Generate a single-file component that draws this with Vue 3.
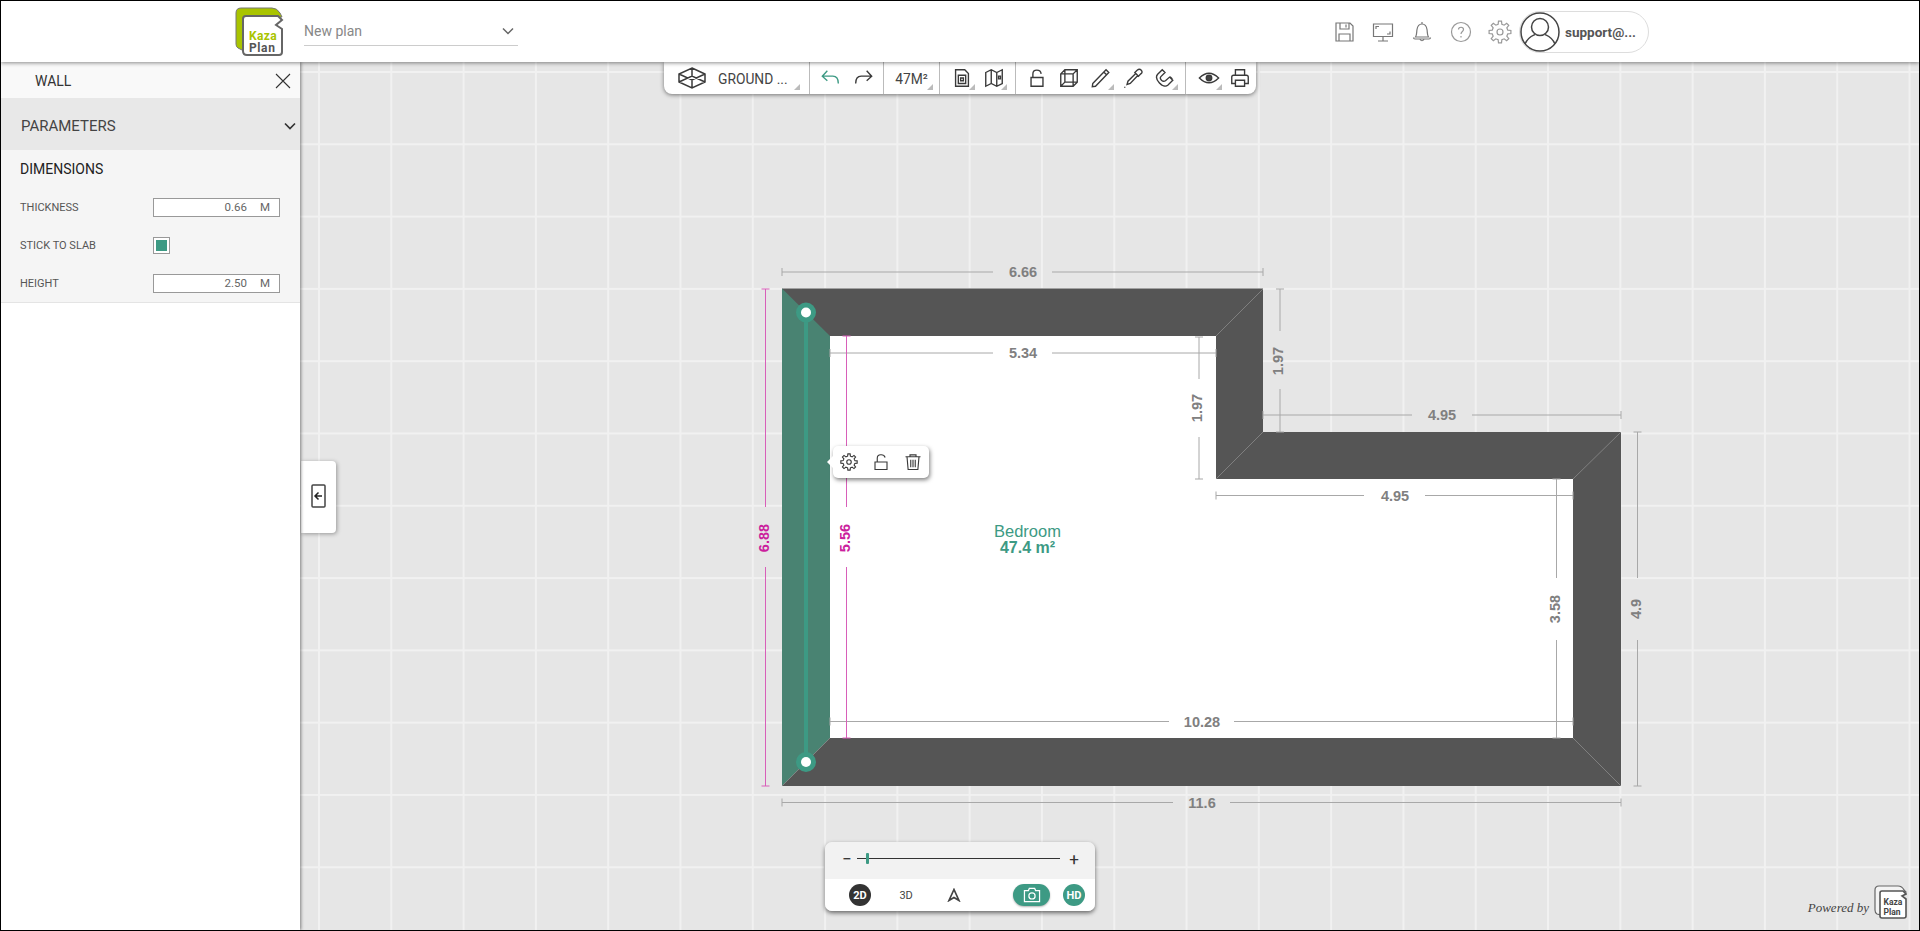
<script setup>
// cotas del plano, en coordenadas de pagina
const hDims = [
  { y: 272, x1: 782, x2: 1263, g1: 993, g2: 1052, tx: 1023, label: '6.66' },
  { y: 353, x1: 830, x2: 1216, g1: 993, g2: 1052, tx: 1023, label: '5.34' },
  { y: 415, x1: 1263, x2: 1621, g1: 1412, g2: 1472, tx: 1442, label: '4.95' },
  { y: 495.5, x1: 1216, x2: 1573, g1: 1364, g2: 1425, tx: 1395, label: '4.95' },
  { y: 721.5, x1: 830, x2: 1573, g1: 1169, g2: 1234, tx: 1202, label: '10.28' },
  { y: 802.5, x1: 782, x2: 1621, g1: 1173, g2: 1230, tx: 1202, label: '11.6' },
]
const vDims = [
  { x: 1199, y1: 337, y2: 479, g1: 379, g2: 437, ty: 408, label: '1.97' },
  { x: 1280, y1: 289, y2: 432, g1: 331, g2: 389, ty: 361, label: '1.97' },
  { x: 1556.5, y1: 479, y2: 738, g1: 578, g2: 640, ty: 609, label: '3.58' },
  { x: 1637.5, y1: 432, y2: 786, g1: 578, g2: 640, ty: 609, label: '4.9' },
]
const pinkDims = [
  { x: 765.5, y1: 289, y2: 786, g1: 507, g2: 567, ty: 538, label: '6.88' },
  { x: 846.5, y1: 336, y2: 738, g1: 507, g2: 567, ty: 538, label: '5.56' },
]
const miters = [
  [1263, 289, 1216, 336],
  [1263, 432, 1216, 479],
  [1621, 432, 1573, 479],
  [1621, 786, 1573, 738],
  [782, 786, 830, 738],
]

// rueda dentada para los iconos de ajustes
const gearPath = (c, rOut, rIn, teeth) => {
  const pts = []
  for (let i = 0; i < teeth; i++) {
    const a = (i / teeth) * Math.PI * 2
    const w = Math.PI / teeth / 2
    const list = [
      [rIn, a - w * 1.2],
      [rOut, a - w * 0.7],
      [rOut, a + w * 0.7],
      [rIn, a + w * 1.2],
    ]
    list.forEach(([r, t]) => pts.push((c + r * Math.cos(t)).toFixed(2) + ' ' + (c + r * Math.sin(t)).toFixed(2)))
  }
  return 'M' + pts.join('L') + 'Z'
}
const gear = gearPath(12, 11, 8, 8)
</script>

<template>
  <div class="app">
    <header class="topbar">
      <div class="brand">
        <svg class="logo" viewBox="0 0 49 49" width="49" height="49">
          <path d="M1 6Q1 1 6 1H37Q42 1 45 6L47 10H9V44L3 41Q1 40 1 37Z" fill="#a9c400" stroke="#777" stroke-width="1" />
          <path d="M8 12Q8 9 11 9H43L47 13L41 18L47 22V45Q47 48 44 48H12Q8 48 8 44Z" fill="#fff" stroke="#666" stroke-width="2" />
          <text x="14" y="33" class="logo-kaza">Kaza</text>
          <text x="14" y="45" class="logo-plan">Plan</text>
        </svg>
        <div class="plan-select">
          <span>New plan</span>
          <svg viewBox="0 0 12 8" width="12" height="8"><path d="M1 1.5L6 6.5L11 1.5" fill="none" stroke="#666" stroke-width="1.5" /></svg>
        </div>
      </div>
      <div class="top-actions">
        <svg viewBox="0 0 24 24" width="24" height="24" class="ti">
          <path d="M4 3H18L21 6V21H4ZM8 3V9H17V3M14 4.5V7.5M7 21V14H18V21" />
        </svg>
        <svg viewBox="0 0 24 24" width="24" height="24" class="ti">
          <path d="M2.5 4H21.5V16.5H2.5ZM12 16.5V21M7 21H17M5 9V6.5H8M19 11.5V14H16" />
        </svg>
        <svg viewBox="0 0 24 24" width="24" height="24" class="ti">
          <path d="M12 2V4M5.5 17C7 15 6.5 12 7 9.5C7.5 6 9.5 4 12 4S16.5 6 17 9.5C17.5 12 17 15 18.5 17ZM3.5 17.5Q3.5 19 5 19H19Q20.5 19 20.5 17.5M10 19.5Q12 22 14 19.5" />
        </svg>
        <svg viewBox="0 0 24 24" width="24" height="24" class="ti ti-light">
          <circle cx="12" cy="12" r="9.5" />
          <path d="M9.5 9.5C9.5 6.5 14.5 6.5 14.5 9.5C14.5 11.5 12 11.5 12 14M12 16V17.5" />
        </svg>
        <svg viewBox="0 0 24 24" width="24" height="24" class="ti ti-light">
          <path :d="gear" />
          <circle cx="12" cy="12" r="3" />
        </svg>
        <div class="user-pill">
          <svg viewBox="0 0 40 40" width="40" height="40" class="avatar">
            <circle cx="20" cy="20" r="19" fill="#fff" stroke="#444" stroke-width="1.5" />
            <circle cx="20" cy="15" r="8.5" fill="none" stroke="#444" stroke-width="1.5" />
            <path d="M5 32C8 25 13 23.5 15 22.5M35 32C32 25 27 23.5 25 22.5" fill="none" stroke="#444" stroke-width="1.5" />
          </svg>
          <span>support@...</span>
        </div>
      </div>
    </header>

    <main class="workspace">
      <aside class="panel">
        <div class="panel-head">
          <span>WALL</span>
          <svg viewBox="0 0 16 16" width="16" height="16"><path d="M1 1L15 15M15 1L1 15" fill="none" stroke="#333" stroke-width="1.1" /></svg>
        </div>
        <div class="panel-acc">
          <span>PARAMETERS</span>
          <svg viewBox="0 0 12 8" width="12" height="8"><path d="M1 1.5L6 6.5L11 1.5" fill="none" stroke="#333" stroke-width="1.7" /></svg>
        </div>
        <section class="panel-body">
          <h3>DIMENSIONS</h3>
          <div class="row">
            <label>THICKNESS</label>
            <div class="field"><span>0.66</span><span class="unit">M</span></div>
          </div>
          <div class="row">
            <label>STICK TO SLAB</label>
            <div class="check"><i></i></div>
          </div>
          <div class="row">
            <label>HEIGHT</label>
            <div class="field"><span>2.50</span><span class="unit">M</span></div>
          </div>
        </section>
      </aside>

      <div class="canvas">
        <svg class="plan" viewBox="300 62 1619 868" width="1619" height="868">
          <path d="M782 288.5H1263V432H1621V786H782Z" fill="#555" />
          <path d="M830 336H1216V479H1573V738H830Z" fill="#fff" />
          <path d="M782 288.5L830 336V738L782 786Z" fill="#498372" />
          <line v-for="(m, i) in miters" :key="i" :x1="m[0]" :y1="m[1]" :x2="m[2]" :y2="m[3]" stroke="#8a8a8a" stroke-width="0.8" />

          <g v-for="d in hDims" :key="d.label + d.y" class="dim">
            <path :d="`M${d.x1} ${d.y}H${d.g1}M${d.g2} ${d.y}H${d.x2}M${d.x1} ${d.y - 4}V${d.y + 4}M${d.x2} ${d.y - 4}V${d.y + 4}`" />
            <text :x="d.tx" :y="d.y" text-anchor="middle" dominant-baseline="central">{{ d.label }}</text>
          </g>
          <g v-for="d in vDims" :key="d.label + d.x" class="dim">
            <path :d="`M${d.x} ${d.y1}V${d.g1}M${d.x} ${d.g2}V${d.y2}M${d.x - 4} ${d.y1}H${d.x + 4}M${d.x - 4} ${d.y2}H${d.x + 4}`" />
            <text :x="d.x - 2" :y="d.ty" text-anchor="middle" dominant-baseline="central" :transform="`rotate(-90 ${d.x - 2} ${d.ty})`">{{ d.label }}</text>
          </g>
          <g v-for="d in pinkDims" :key="d.label" class="dim dim-pink">
            <path :d="`M${d.x} ${d.y1}V${d.g1}M${d.x} ${d.g2}V${d.y2}M${d.x - 4} ${d.y1}H${d.x + 4}M${d.x - 4} ${d.y2}H${d.x + 4}`" />
            <text :x="d.x - 2" :y="d.ty" text-anchor="middle" dominant-baseline="central" :transform="`rotate(-90 ${d.x - 2} ${d.ty})`">{{ d.label }}</text>
          </g>

          <line x1="806" y1="312" x2="806" y2="762" stroke="#3d9a84" stroke-width="4" />
          <circle cx="806" cy="312.5" r="10" fill="#3d9a84" />
          <circle cx="806" cy="312.5" r="5" fill="#fff" />
          <circle cx="806" cy="762" r="10" fill="#3d9a84" />
          <circle cx="806" cy="762" r="5" fill="#fff" />

          <text x="1027.5" y="536.5" class="room-name" text-anchor="middle">Bedroom</text>
          <text x="1027.5" y="552.5" class="room-area" text-anchor="middle">47.4 m²</text>
        </svg>

        <nav class="toolbar">
          <div class="tgroup tg-level corner">
            <svg viewBox="0 0 30 24" width="30" height="24" class="ti ti-dark">
              <path d="M15 2L28 8V16L15 22L2 16V8ZM2 8L15 14L28 8M15 14V22M2 16L15 10L28 16M15 2V10" />
            </svg>
            <span>GROUND ...</span>
          </div>
          <div class="tgroup tg-undo">
            <button>
              <svg viewBox="0 0 24 24" width="22" height="22" class="ti ti-green"><path d="M8 4L2.5 10L8 15M3 10H14Q20 10 20 18" /></svg>
            </button>
            <button>
              <svg viewBox="0 0 24 24" width="22" height="22" class="ti ti-dark"><path d="M16 4L21.5 10L16 15M21 10H10Q4 10 4 18" /></svg>
            </button>
          </div>
          <div class="tgroup tg-area corner"><span>47M²</span></div>
          <div class="tgroup tg-four">
            <button class="corner">
              <svg viewBox="0 0 24 24" width="22" height="22" class="ti ti-dark"><path d="M5 3H15L19 7V21H5ZM8 9H16V18H8ZM10.5 12H13.5V15H10.5Z" /></svg>
            </button>
            <button class="corner">
              <svg viewBox="0 0 24 24" width="22" height="22" class="ti ti-dark"><path d="M3 6L9 3L15 6L21 3V18L15 21L9 18L3 21ZM9 3V18M15 6V21M17 10H19V13H17Z" /></svg>
            </button>
          </div>
          <div class="tgroup tg-five">
            <button>
              <svg viewBox="0 0 24 24" width="22" height="22" class="ti ti-dark"><path d="M5.5 11.5H18.5V21H5.5ZM7.5 11.5V7.5C7.5 2 16 2 16.5 7.5" /></svg>
            </button>
            <button>
              <svg viewBox="0 0 24 24" width="22" height="22" class="ti ti-dark"><path d="M3 7.5L7.5 3H21V16.5L16.5 21H3ZM3 7.5H16.5V21M16.5 7.5L21 3M7.5 3V16.5H21M7.5 16.5L3 21" /></svg>
            </button>
            <button class="corner">
              <svg viewBox="0 0 24 24" width="22" height="22" class="ti ti-dark"><path d="M3 18L17.5 3L20.5 6L6 21L2.5 21.5ZM15 5.5L18 8.5" /></svg>
            </button>
            <button>
              <svg viewBox="0 0 24 24" width="22" height="22" class="ti ti-dark"><path d="M16.5 3.5Q19 1.5 21 3.5T20.5 7.5L18 10L14 6ZM15 7L6.5 15.5L5.5 19L9 18L17 9.5M3 22.5V21.5" /></svg>
            </button>
            <button class="corner">
              <svg viewBox="0 0 24 24" width="22" height="22" class="ti ti-dark"><path d="M12 6L7.5 10.5C5.5 13 9.5 17 12.5 15L17 11L20.5 14.5L15 20C10 24 -0.5 13 4 8L9 3ZM9 3L11.5 5.5M17.5 10.5L20 13" /></svg>
            </button>
          </div>
          <div class="tgroup tg-six">
            <button class="corner">
              <svg viewBox="0 0 24 24" width="22" height="22" class="ti ti-dark"><path d="M1.5 12Q12 1.5 22.5 12Q12 22.5 1.5 12Z" /><circle cx="12" cy="12" r="3" fill="#444" /></svg>
            </button>
            <button>
              <svg viewBox="0 0 24 24" width="22" height="22" class="ti ti-dark"><path d="M7 9V3H17V9M7 18H3V11Q3 9 5 9H19Q21 9 21 11V18H17M7 14.5H17V21H7Z" /></svg>
            </button>
          </div>
        </nav>

        <button class="panel-tab">
          <svg viewBox="0 0 15 24" width="15" height="24">
            <rect x="1" y="1" width="13" height="22" rx="1" fill="none" stroke="#444" stroke-width="1.5" />
            <path d="M11 12H4M7.5 8.5L4 12L7.5 15.5" fill="none" stroke="#222" stroke-width="1.5" />
          </svg>
        </button>

        <div class="wall-menu">
          <svg viewBox="0 0 24 24" width="18" height="18" class="ti ti-dark">
            <path :d="gear" />
            <circle cx="12" cy="12" r="3" />
          </svg>
          <svg viewBox="0 0 24 24" width="18" height="18" class="ti ti-dark">
            <path d="M4 12H20V22H4ZM7 12V7C7 1 16 1 17.5 6" />
          </svg>
          <svg viewBox="0 0 24 24" width="18" height="18" class="ti ti-dark">
            <path d="M2 5H22M8 5V2.5H16V5M4 5L5.5 22H18.5L20 5M9 9V19M12 9V19M15 9V19" />
          </svg>
        </div>

        <div class="zoom-box">
          <div class="zoom-slider">
            <span class="sign">−</span>
            <div class="track"><i></i></div>
            <span class="sign">+</span>
          </div>
          <div class="zoom-modes">
            <span class="mode-round dark">2D</span>
            <span class="mode-3d">3D</span>
            <svg viewBox="0 0 14 14" width="14" height="14" class="mode-north">
              <path d="M7 1.5L2 12.5L7 9.5L12 12.5Z" fill="none" stroke="#444" stroke-width="1.7" />
            </svg>
            <span class="mode-cam">
              <svg viewBox="0 0 20 18" width="18" height="16">
                <path d="M1.5 4H6L7 1.5H13L14 4H18.5V16.5H1.5Z" fill="none" stroke="#fff" stroke-width="1.4" />
                <circle cx="10" cy="10" r="3.5" fill="none" stroke="#fff" stroke-width="1.4" />
              </svg>
            </span>
            <span class="mode-round green">HD</span>
          </div>
        </div>

        <div class="powered">
          <span>Powered by</span>
          <svg viewBox="0 0 33 34" width="33" height="34">
            <path d="M1 5Q1 1 5 1H24Q28 1 30 5L32 7H7V30L3 29Q1 28 1 25Z" fill="#f4f4f4" stroke="#666" stroke-width="1.2" />
            <path d="M6 8Q6 6 8 6H29L32 9L28 11L32 14V31Q32 33 30 33H8Q6 33 6 31Z" fill="#fff" stroke="#555" stroke-width="1.6" />
            <text x="9.5" y="20" class="pw-text">Kaza</text>
            <text x="9.5" y="30" class="pw-text">Plan</text>
          </svg>
        </div>
      </div>
    </main>
  </div>
</template>

<style scoped>
.app {
  box-sizing: border-box;
  width: 1920px;
  height: 931px;
  display: flex;
  flex-direction: column;
  border: 1px solid #000;
  overflow: hidden;
  font-family: Roboto, 'Liberation Sans', sans-serif;
  color: #444;
  background: #fff;
}

.topbar {
  position: relative;
  z-index: 5;
  flex: 0 0 61px;
  display: flex;
  align-items: center;
  justify-content: space-between;
  background: #fff;
  box-shadow: 0 1px 4px rgba(0, 0, 0, 0.45);
  padding: 0 270px 0 234px;
}
.brand {
  display: flex;
  align-items: center;
  gap: 20px;
}
.logo-kaza {
  font: 700 12px Roboto, sans-serif;
  letter-spacing: 0.4px;
  fill: #a9c400;
}
.logo-plan {
  font: 700 12px Roboto, sans-serif;
  letter-spacing: 0.6px;
  fill: #555;
}
.plan-select {
  box-sizing: border-box;
  width: 214px;
  height: 31px;
  margin-top: -2px;
  padding: 2px 4px 0 0;
  display: flex;
  align-items: center;
  justify-content: space-between;
  border-bottom: 1px solid #ccc;
  font-size: 14px;
  color: #888;
}
.top-actions {
  display: flex;
  align-items: center;
  gap: 15px;
}
.ti {
  fill: none;
  stroke: #777;
  stroke-width: 1.2;
  display: block;
}
.ti-light {
  stroke: #999;
}
.ti-dark {
  stroke: #3a3a3a;
  stroke-width: 1.5;
}
.ti-green {
  stroke: #3d9a84;
  stroke-width: 1.5;
}
.user-pill {
  box-sizing: border-box;
  width: 130px;
  height: 42px;
  margin-left: -8px;
  display: flex;
  align-items: center;
  gap: 5px;
  border: 1px solid #ddd;
  border-radius: 21px;
  font-size: 13.5px;
  font-weight: 700;
  color: #555;
}
.avatar {
  flex: none;
}

.workspace {
  flex: 1;
  display: flex;
  min-height: 0;
}

.panel {
  position: relative;
  z-index: 4;
  flex: 0 0 299px;
  background: #fff;
  box-shadow: 1px 0 3px rgba(0, 0, 0, 0.45);
}
.panel-head {
  box-sizing: border-box;
  height: 36px;
  display: flex;
  align-items: center;
  justify-content: space-between;
  padding: 2px 9px 0 34px;
  background: #f9f9f9;
  font-size: 14px;
  color: #333;
}
.panel-acc {
  box-sizing: border-box;
  height: 52px;
  display: flex;
  align-items: center;
  justify-content: space-between;
  padding: 3px 4px 0 20px;
  background: #e8e8e8;
  font-size: 15px;
  color: #444;
}
.panel-body {
  box-sizing: border-box;
  height: 153px;
  padding: 11px 20px 0 19px;
  background: #f5f5f5;
  border-bottom: 1px solid #e4e4e4;
}
.panel-body h3 {
  margin: 0 0 11px;
  font-size: 14px;
  line-height: 16px;
  font-weight: 400;
  color: #222;
}
.row {
  height: 38px;
  display: flex;
  align-items: center;
  justify-content: space-between;
}
.row label {
  font-size: 11px;
  color: #555;
}
.field {
  box-sizing: border-box;
  width: 127px;
  height: 19px;
  display: flex;
  align-items: center;
  justify-content: flex-end;
  padding-right: 9px;
  background: #fff;
  border: 1px solid #999;
  font-size: 11.5px;
  color: #666;
}
.unit {
  margin-left: 13px;
}
.check {
  box-sizing: border-box;
  width: 17px;
  height: 17px;
  margin-right: 110px;
  padding: 2px;
  background: #fff;
  border: 1px solid #999;
}
.check i {
  display: block;
  width: 100%;
  height: 100%;
  background: #3d9a84;
}

.canvas {
  position: relative;
  flex: 1;
  overflow: hidden;
  background-color: #e6e6e6;
  background-image:
    linear-gradient(to right, #f1f1f1 2px, transparent 2px),
    linear-gradient(to bottom, #f1f1f1 2px, transparent 2px);
  background-size: 72.3px 72.3px;
  background-position: 18px 9px;
}
.plan {
  position: absolute;
  top: 0;
  left: 0;
}
.dim path {
  fill: none;
  stroke: #a8a8a8;
  stroke-width: 1;
}
.dim text {
  font: 700 14.5px 'Liberation Sans', Arial, sans-serif;
  fill: #808080;
}
.dim-pink path {
  stroke: #d85fb9;
}
.dim-pink text {
  fill: #cb1f9d;
}
.room-name {
  font: 400 16.5px 'Liberation Sans', Arial, sans-serif;
  fill: #3d9a84;
}
.room-area {
  font: 700 16px 'Liberation Sans', Arial, sans-serif;
  fill: #3d9a84;
}

.toolbar {
  position: absolute;
  top: 0;
  left: 364px;
  height: 32px;
  display: flex;
  background: #fff;
  border-radius: 0 0 8px 8px;
  box-shadow: 0 1px 4px rgba(0, 0, 0, 0.5);
}
.tgroup {
  box-sizing: border-box;
  position: relative;
  display: flex;
  align-items: center;
  justify-content: center;
  border-right: 1px solid #bbb;
  font-size: 13.8px;
  color: #444;
}
.tgroup span {
  padding-top: 2px;
}
.tgroup:last-child {
  border-right: 0;
}
.tgroup button {
  position: relative;
  width: 32px;
  height: 32px;
  padding: 0;
  display: flex;
  align-items: center;
  justify-content: center;
  background: none;
  border: 0;
}
.corner::after {
  content: '';
  position: absolute;
  right: 3px;
  bottom: 4px;
  border-style: solid;
  border-width: 0 0 6px 6px;
  border-color: transparent transparent #bbb transparent;
}
.tg-level {
  width: 146px;
  justify-content: flex-start;
  padding-left: 13px;
  gap: 11px;
}
.tg-level::after {
  right: 9px;
}
.tg-undo {
  width: 74px;
}
.tg-area {
  width: 56px;
}
.tg-area::after {
  right: 6px;
}
.tg-four {
  width: 76px;
}
.tg-five {
  width: 170px;
}
.tg-six {
  width: 70px;
  padding-left: 7px;
  justify-content: flex-start;
}

.panel-tab {
  position: absolute;
  top: 399px;
  left: 1px;
  width: 35px;
  height: 72px;
  padding: 0 1px 3px 0;
  display: flex;
  align-items: center;
  justify-content: center;
  background: #fff;
  border: 0;
  border-radius: 0 4px 4px 0;
  box-shadow: 1px 1px 4px rgba(0, 0, 0, 0.35);
}

.wall-menu {
  position: absolute;
  top: 384px;
  left: 533px;
  width: 96px;
  height: 32px;
  display: flex;
  align-items: center;
  justify-content: center;
  gap: 14px;
  background: #fff;
  border-radius: 5px;
  box-shadow: 1px 2px 4px rgba(0, 0, 0, 0.5);
}
.wall-menu::before {
  content: '';
  position: absolute;
  left: -6px;
  top: 10px;
  width: 0;
  height: 0;
  border-style: solid;
  border-width: 6px 6px 6px 0;
  border-color: transparent #fff transparent transparent;
}

.zoom-box {
  position: absolute;
  top: 780px;
  left: 525px;
  width: 270px;
  height: 69px;
  display: flex;
  flex-direction: column;
  overflow: hidden;
  border-radius: 7px;
  box-shadow: 0 2px 4px rgba(0, 0, 0, 0.55);
}
.zoom-slider {
  box-sizing: border-box;
  flex: 0 0 37px;
  display: flex;
  align-items: center;
  padding: 0 16px 4px 17px;
  gap: 5px;
  background: #f2f2f2;
}
.sign {
  width: 10px;
  font-size: 17px;
  text-align: center;
  color: #333;
}
.track {
  position: relative;
  flex: 1;
  height: 1px;
  margin-right: 4px;
  background: #333;
}
.track i {
  position: absolute;
  left: 9px;
  top: -5px;
  width: 3px;
  height: 11px;
  border-radius: 1px;
  background: #3d9a84;
}
.zoom-modes {
  flex: 1;
  display: flex;
  align-items: center;
  padding: 0 10px 0 24px;
  background: #fff;
}
.mode-round {
  width: 22px;
  height: 22px;
  display: flex;
  align-items: center;
  justify-content: center;
  border-radius: 50%;
  color: #fff;
  font-size: 11px;
  font-weight: 700;
}
.mode-round.dark {
  background: #333;
}
.mode-round.green {
  background: #3d9a84;
  margin-left: 13px;
}
.mode-3d {
  margin-left: 28.5px;
  font-size: 11px;
  color: #444;
}
.mode-north {
  margin-left: 34px;
}
.mode-cam {
  margin-left: 52.5px;
  width: 37px;
  height: 22px;
  display: flex;
  align-items: center;
  justify-content: center;
  border-radius: 11px;
  background: #3d9a84;
  box-shadow: 0 1px 2px rgba(0, 0, 0, 0.3);
}

.powered {
  position: absolute;
  right: 12px;
  bottom: 11px;
  display: flex;
  align-items: flex-end;
  gap: 5px;
  font: italic 13px 'Liberation Serif', serif;
  color: #444;
}
.powered span {
  margin-bottom: 3px;
}
.pw-text {
  font: 700 8.5px Roboto, sans-serif;
  fill: #444;
}
</style>

<style>
html,
body {
  margin: 0;
  background: #fff;
}
</style>
